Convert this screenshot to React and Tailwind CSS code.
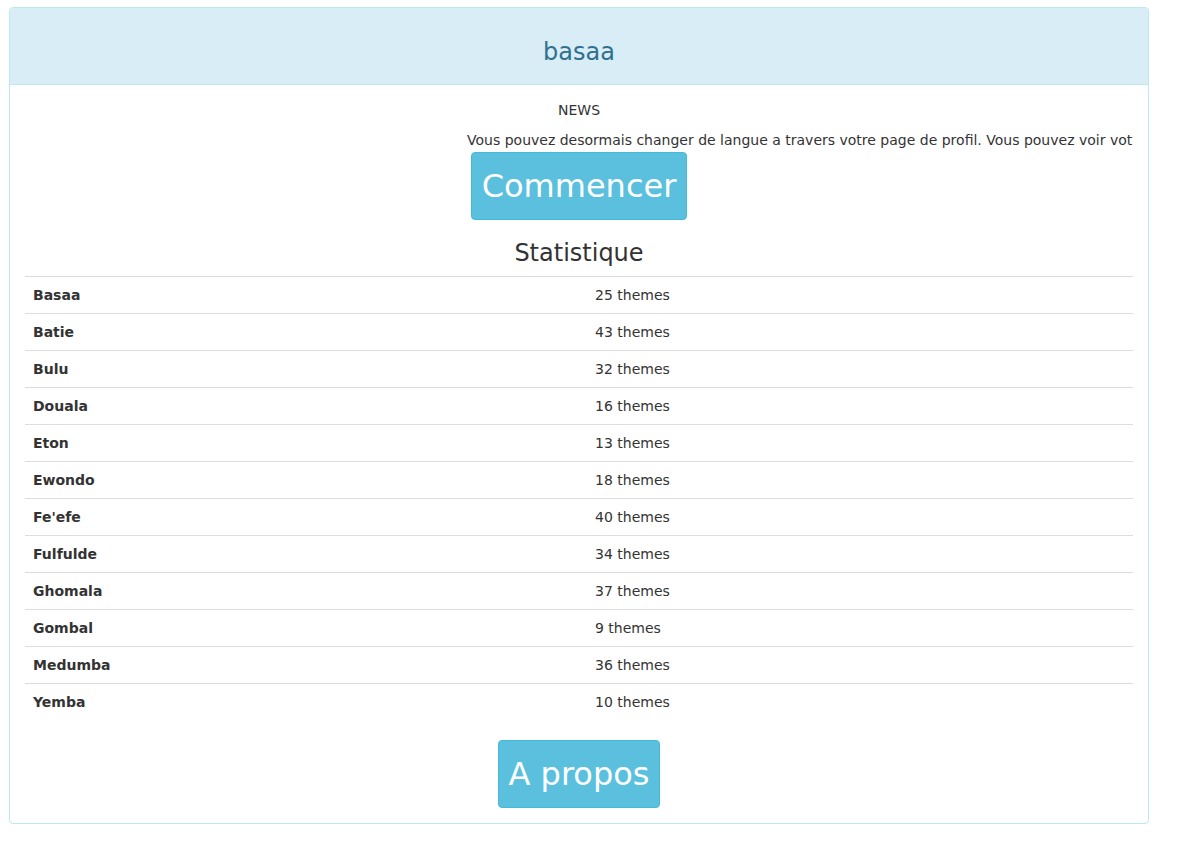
const stats = [
  { lang: 'Basaa', count: 25 },
  { lang: 'Batie', count: 43 },
  { lang: 'Bulu', count: 32 },
  { lang: 'Douala', count: 16 },
  { lang: 'Eton', count: 13 },
  { lang: 'Ewondo', count: 18 },
  { lang: "Fe'efe", count: 40 },
  { lang: 'Fulfulde', count: 34 },
  { lang: 'Ghomala', count: 37 },
  { lang: 'Gombal', count: 9 },
  { lang: 'Medumba', count: 36 },
  { lang: 'Yemba', count: 10 },
];

const App = () => {
  return (
    <div className="min-h-[847px] bg-white pl-[9px] pt-[7px] text-[14px] text-[#333] font-['DejaVu_Sans',sans-serif]">
      <div className="w-[1140px] border border-[#bce8f1] rounded-[4px] bg-white">
        {/* Cabecera del panel */}
        <div className="bg-[#d9edf7] border-b border-[#bce8f1] rounded-t-[3px] pt-[31px] pb-[19px] text-center">
          <h3 className="text-[24px] leading-[26px] text-[#31708f]">basaa</h3>
        </div>

        <div className="p-[15px] text-center">
          <div className="leading-[20px]">NEWS</div>
          {/* Texto desplazado como una marquesina, cortado en el borde */}
          <div className="mt-[10px] overflow-hidden whitespace-nowrap text-left leading-[20px]">
            <span className="pl-[442px]">
              Vous pouvez desormais changer de langue a travers votre page de profil. Vous pouvez voir votre progression.
            </span>
          </div>

          <button className="mt-[2px] h-[68px] px-[10px] bg-[#5bc0de] border border-[#46b8da] rounded-[4px] text-white text-[32px] leading-[44px]">
            Commencer
          </button>

          <h3 className="mt-[20px] mb-[10px] text-[24px] leading-[26px]">Statistique</h3>

          <table className="w-full text-left border-collapse">
            <tbody>
              {stats.map((s) => (
                <tr key={s.lang} className="border-t border-[#ddd]">
                  <td className="w-[562px] p-[8px] leading-[20px] font-bold">{s.lang}</td>
                  <td className="p-[8px] leading-[20px]">{s.count} themes</td>
                </tr>
              ))}
            </tbody>
          </table>

          <button className="mt-[20px] h-[68px] px-[10px] bg-[#5bc0de] border border-[#46b8da] rounded-[4px] text-white text-[32px] leading-[44px]">
            A propos
          </button>
        </div>
      </div>
    </div>
  );
};

export default App;
